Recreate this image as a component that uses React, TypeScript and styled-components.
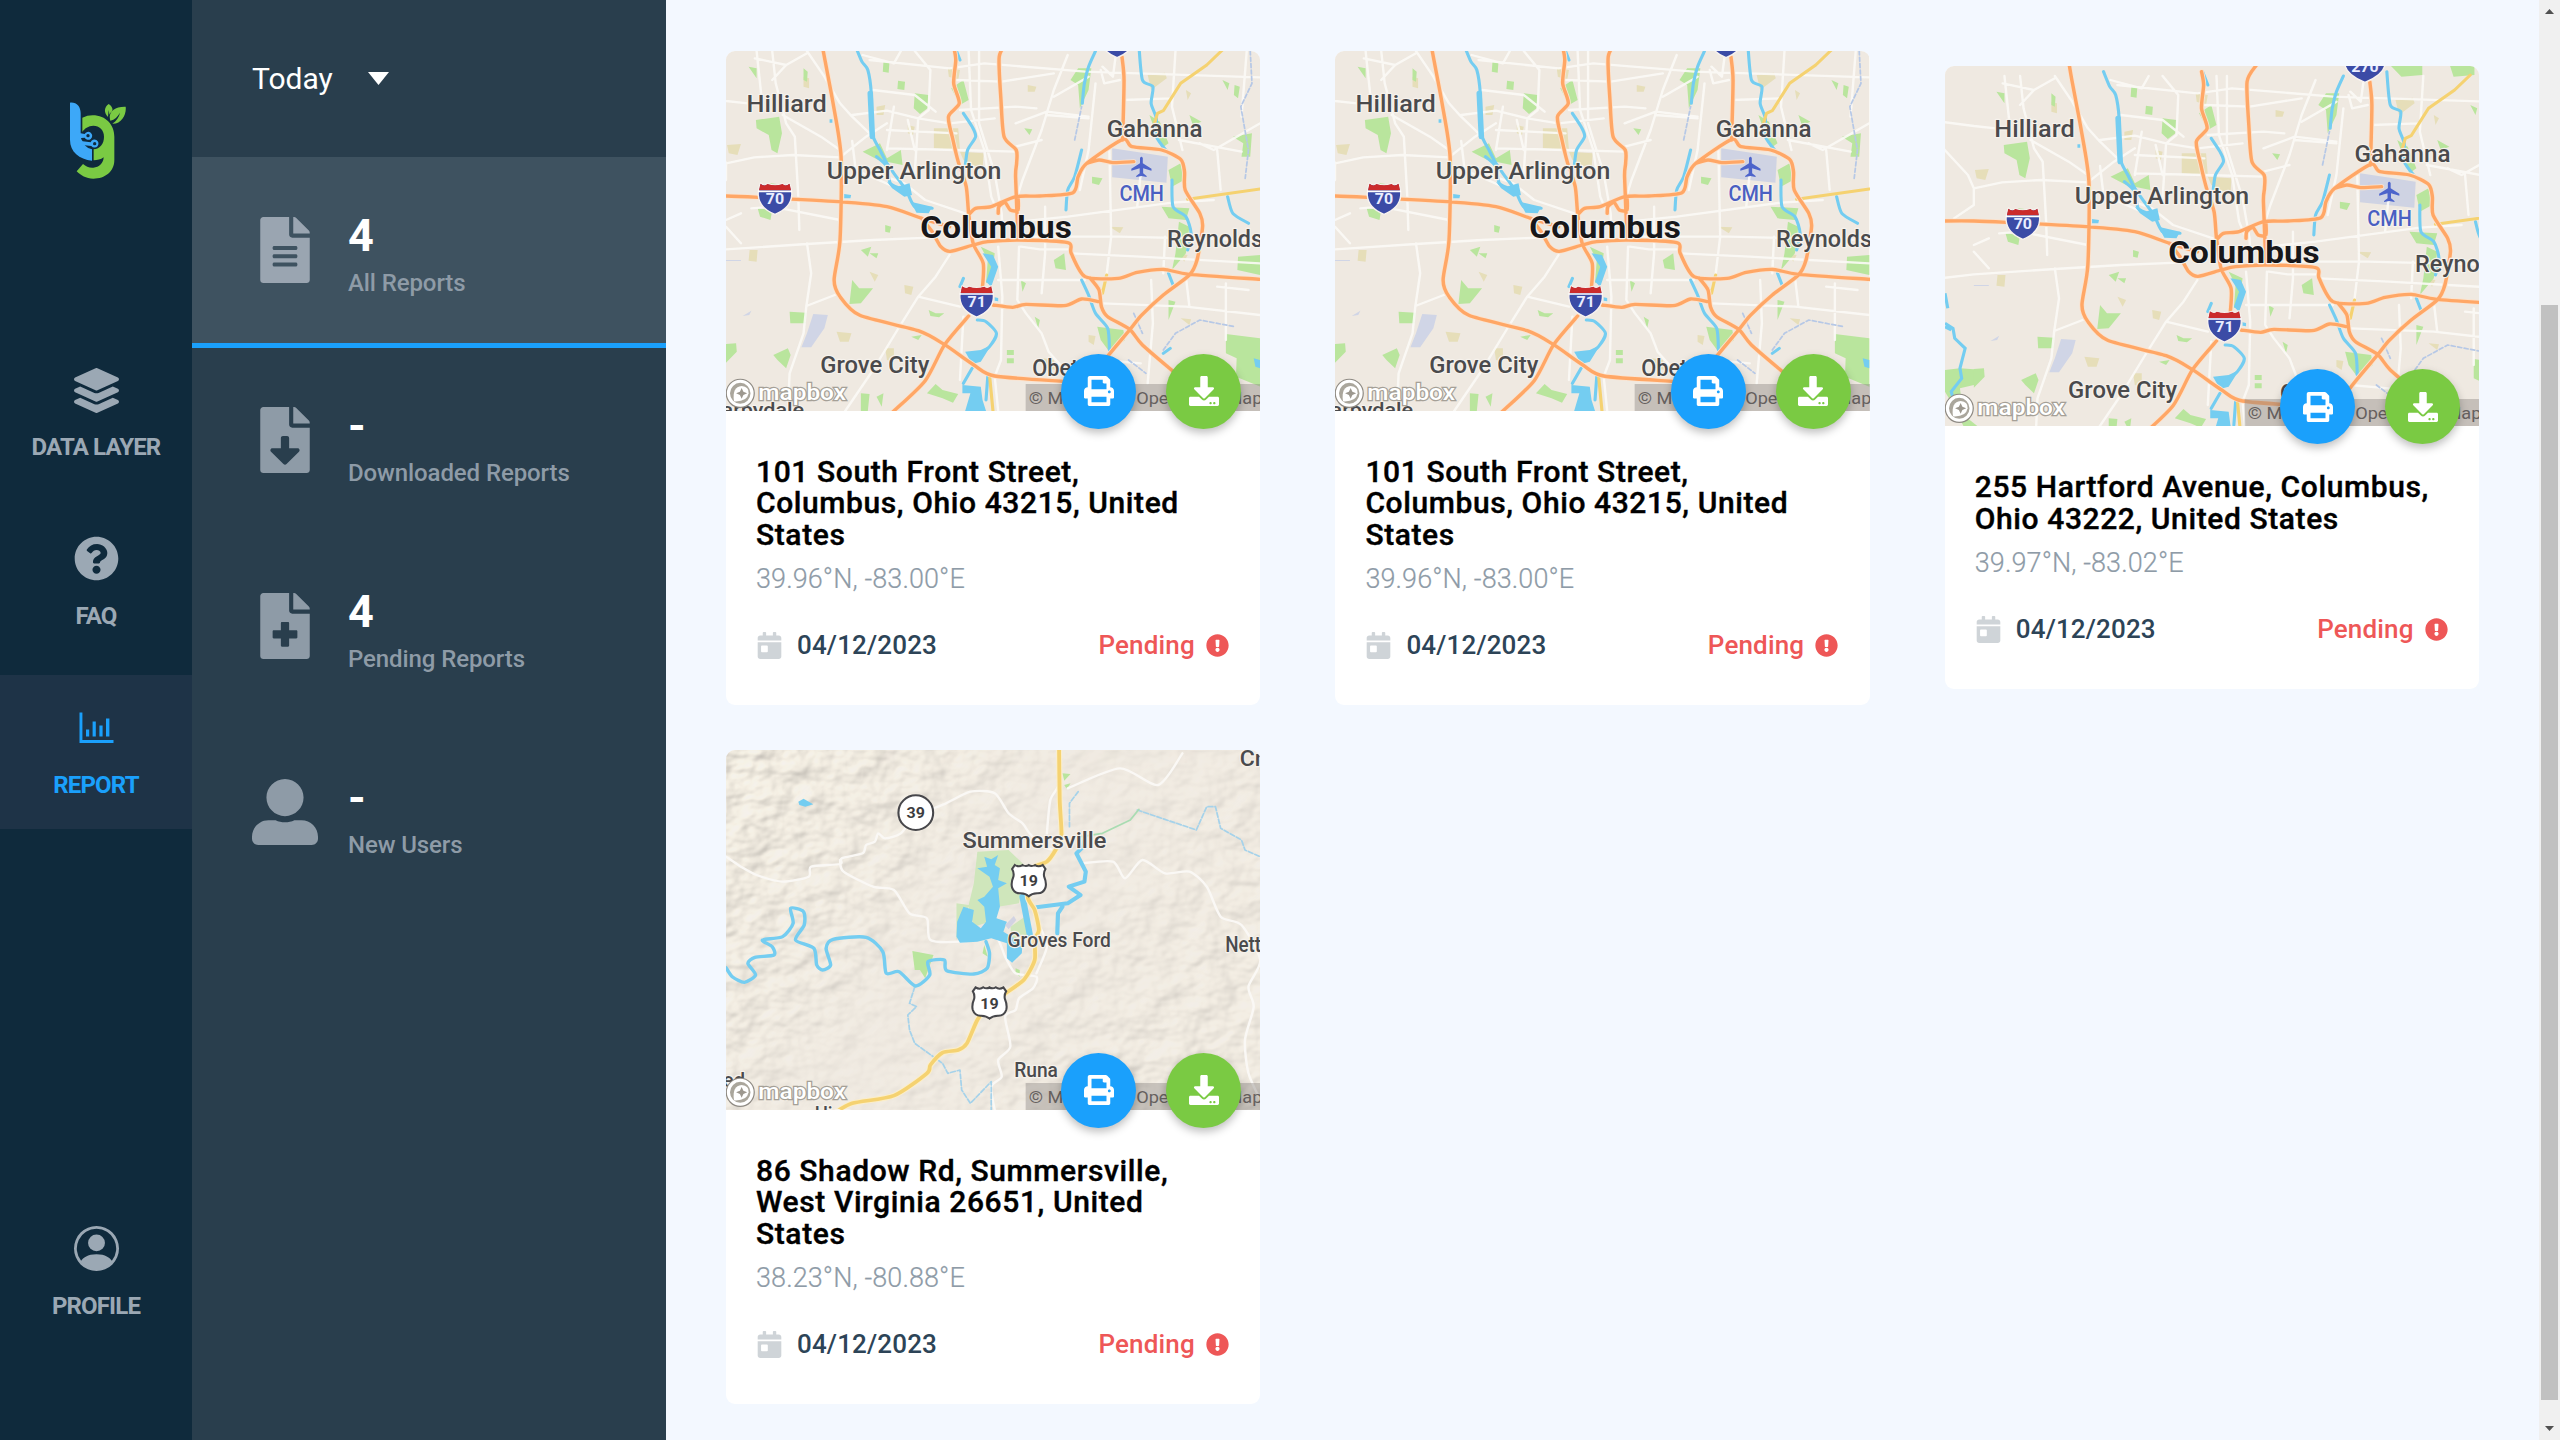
import React from "react";
import styled, { createGlobalStyle, css } from "styled-components";
import {
  FaCalendarDay,
  FaDownload,
  FaExclamationCircle,
  FaFileAlt,
  FaFileDownload,
  FaFileMedical,
  FaLayerGroup,
  FaPrint,
  FaQuestionCircle,
  FaUserAlt,
} from "react-icons/fa";
import { BsPersonCircle } from "react-icons/bs";

const color = {
  rail: "#0f2a3c",
  railActive: "#1e3347",
  panel: "#293e4d",
  panelActive: "#3e5260",
  page: "#f3f8ff",
  blue: "#1aa0fc",
  green: "#7aca43",
  red: "#ee5757",
  muted: "#9ba8b4",
  label: "#8e9ba7",
};

const GlobalStyle = createGlobalStyle`
  *, *::before, *::after { box-sizing: border-box; }
  body {
    margin: 0;
    overflow: hidden;
    background: ${color.page};
    font-family: Roboto, "Liberation Sans", sans-serif;
  }
`;

const Shell = styled.div`
  display: flex;
  width: 2560px;
  height: 1440px;
  overflow: hidden;
`;

/* ---------- navigation rail ---------- */

const Rail = styled.nav`
  display: flex;
  flex-direction: column;
  align-items: stretch;
  flex: 0 0 192px;
  padding: 102px 0 90px;
  background: ${color.rail};
`;

const LogoMark = styled.svg`
  display: block;
  width: 56px;
  height: 77px;
  margin: 0 0 158px 70px;
`;

const RailGroup = styled.div`
  display: flex;
  flex-direction: column;
  gap: 15px;
`;

const RailItem = styled.a<{ $active?: boolean; $last?: boolean }>`
  display: flex;
  flex-direction: column;
  align-items: center;
  height: 154px;
  padding-top: 30px;
  color: ${(p) => (p.$active ? color.blue : color.muted)};
  background: ${(p) => (p.$active ? color.railActive : "transparent")};
  ${(p) => p.$last && css`margin-top: auto;`}
`;

const RailIcon = styled.span<{ $drop?: number }>`
  display: flex;
  align-items: center;
  justify-content: center;
  height: 45px;
  padding-top: ${(p) => p.$drop ?? 0}px;
  font-size: 45px;

  svg {
    flex: none;
  }
`;

const RailLabel = styled.span`
  margin-top: 20px;
  font-size: 24px;
  font-weight: 700;
  line-height: 30px;
  letter-spacing: -0.85px;
  white-space: nowrap;
`;

/* ---------- report summary panel ---------- */

const Panel = styled.aside`
  flex: 0 0 474px;
  background: ${color.panel};
`;

const PeriodPicker = styled.div`
  display: flex;
  align-items: flex-start;
  height: 157px;
  padding: 61px 0 0 60px;
  color: #fff;
  font-size: 30px;
  line-height: 36px;
`;

const PeriodName = styled.span`
  width: 116px;
`;

const Caret = styled.svg`
  width: 21px;
  height: 13px;
  margin-top: 11px;
`;

const Stat = styled.div<{ $active?: boolean }>`
  display: flex;
  gap: 30px;
  height: ${(p) => (p.$active ? 191 : 186)}px;
  padding: ${(p) => (p.$active ? 60 : 59)}px 0 0 60px;
  background: ${(p) => (p.$active ? color.panelActive : "transparent")};
  border-bottom: ${(p) => (p.$active ? `5px solid ${color.blue}` : "0")};
`;

const StatIcon = styled.span<{ $active?: boolean }>`
  display: flex;
  justify-content: center;
  width: 66px;
  height: 66px;
  color: ${(p) => (p.$active ? "#9aa5b1" : color.label)};
  font-size: 66px;
`;

const StatText = styled.div`
  display: flex;
  flex-direction: column;
`;

const StatValue = styled.strong`
  height: 52px;
  margin-top: -7px;
  color: #fff;
  font-size: 45px;
  font-weight: 700;
  line-height: 52px;
`;

const StatLabel = styled.span`
  margin-top: 6px;
  color: ${color.label};
  font-size: 24px;
  font-weight: 500;
  line-height: 30px;
  letter-spacing: -0.1px;
  white-space: nowrap;
`;

/* ---------- report cards ---------- */

const Content = styled.main`
  flex: 1;
  padding: 50.6px 60px 0;
`;

const CardGrid = styled.div`
  display: grid;
  grid-template-columns: repeat(3, 534.3px);
  align-items: center;
  column-gap: 75.1px;
  row-gap: 45px;
`;

const Card = styled.article`
  border-radius: 9px;
  background: #fff;
`;

const MapFrame = styled.div`
  position: relative;
  height: 360px;
`;

const MapSvg = styled.svg`
  display: block;
  width: 100%;
  height: 360px;
  border-radius: 9px 9px 0 0;
  overflow: hidden;
  font-family: Roboto, "Liberation Sans", sans-serif;
`;

const CardActions = styled.div`
  position: absolute;
  right: 19px;
  bottom: -18px;
  display: flex;
  gap: 30px;
`;

const RoundButton = styled.button<{ $tone: string }>`
  display: flex;
  align-items: center;
  justify-content: center;
  width: 75px;
  height: 75px;
  padding: 0;
  border: 0;
  border-radius: 50%;
  color: #fff;
  background: ${(p) => p.$tone};
  box-shadow: 0 4px 9px rgba(0, 0, 0, 0.25);
  font-size: 30px;
`;

const CardBody = styled.div`
  padding: 45px 30px 42.7px;
`;

const Address = styled.h3`
  margin: 0;
  color: #000;
  font-size: 30px;
  font-weight: 500;
  line-height: 31.5px;
  letter-spacing: 0.6px;
  -webkit-text-stroke: 0.4px #000;
`;

const Coordinates = styled.p`
  margin: 13px 0 0;
  color: ${color.label};
  font-size: 27px;
  font-weight: 300;
  line-height: 32px;
  letter-spacing: 0.1px;
  -webkit-text-stroke: 0.2px ${color.label};
`;

const CardFooter = styled.div`
  display: flex;
  justify-content: space-between;
  margin-top: 33px;
  padding-right: 1.5px;
  line-height: 34px;
`;

const Meta = styled.span<{ $tone: string; $gap: number }>`
  display: flex;
  align-items: center;
  gap: ${(p) => p.$gap}px;
  color: ${(p) => p.$tone};
  font-size: 26px;
  font-weight: 500;
  letter-spacing: 0.15px;
`;

const MetaIcon = styled.span<{ $tone: string; $size: number }>`
  display: flex;
  color: ${(p) => p.$tone};
  font-size: ${(p) => p.$size}px;
`;

/* ---------- scroll track ---------- */

const ScrollTrack = styled.div`
  display: flex;
  flex-direction: column;
  align-items: center;
  justify-content: space-between;
  flex: 0 0 21px;
  padding: 9px 0;
  background: #f0f0f0;
`;

const ScrollThumb = styled.div`
  width: 17px;
  height: 1095px;
  margin: 291px 0 26px;
  background: #c1c1c1;
`;

const ScrollArrow = styled.svg`
  flex: none;
  width: 9px;
  height: 5px;
`;

/* ---------- map artwork ---------- */

/* Turns "M x y L x y x y ..." polylines into gently rounded curves. */
const smooth = (d: string) =>
  d
    .split("M")
    .filter((part) => part.trim())
    .map((part) => {
      const n = part.replace(/L/g, " ").trim().split(/\s+/).map(Number);
      const pts: number[][] = [];
      for (let i = 0; i + 1 < n.length; i += 2) pts.push([n[i], n[i + 1]]);
      let out = `M${pts[0][0]} ${pts[0][1]}`;
      for (let i = 0; i < pts.length - 1; i++) {
        const a = pts[Math.max(0, i - 1)];
        const b = pts[i];
        const c = pts[i + 1];
        const e = pts[Math.min(pts.length - 1, i + 2)];
        out += ` C${b[0] + (c[0] - a[0]) / 8} ${b[1] + (c[1] - a[1]) / 8} ${c[0] - (e[0] - b[0]) / 8} ${c[1] - (e[1] - b[1]) / 8} ${c[0]} ${c[1]}`;
      }
      return out;
    })
    .join(" ");

type LabelProps = { x: number; y: number; w?: number; size: number; fill?: string; weight?: number; children: string };

const MapLabel = ({ x, y, w, size, fill = "#4a4a4c", weight = 500, children }: LabelProps) => (
  <text
    x={x}
    y={y}
    textLength={w}
    lengthAdjust="spacingAndGlyphs"
    fontSize={size}
    fontWeight={weight}
    fill={fill}
    stroke="#f6f2ec"
    strokeWidth={7}
    strokeLinejoin="round"
    paintOrder="stroke"
  >
    {children}
  </text>
);

const Interstate = ({ x, y, n, wide = 0 }: { x: number; y: number; n: string; wide?: number }) => (
  <g transform={`translate(${x} ${y})`}>
    <path
      d={`M${-42 - wide} -46 Q-30 -36 -22 -44 Q0 -36 22 -44 Q30 -36 ${42 + wide} -46 Q${50 + wide} -20 ${48 + wide} -8 C${46 + wide} 20 24 38 0 48 C-24 38 ${-46 - wide} 20 ${-48 - wide} -8 Q${-50 - wide} -20 ${-42 - wide} -46 Z`}
      fill="#3b4ba6"
      stroke="#f7f2ee"
      strokeWidth="4"
    />
    <path
      d={`M${-42 - wide} -44 Q-30 -34 -22 -43 Q0 -35 22 -43 Q30 -34 ${42 + wide} -44 L${46 + wide} -24 H${-46 - wide} Z`}
      fill="#cb2b2c"
    />
    <path d={`M${-47 - wide} -21 H${47 + wide}`} stroke="#fff" strokeWidth="5" />
    <text x="0" y="18" fontSize="46" fontWeight="700" fill="#e9edff" textAnchor="middle">
      {n}
    </text>
  </g>
);

const UsRoute = ({ x, y }: { x: number; y: number }) => (
  <g transform={`translate(${x} ${y})`}>
    <path
      d="M-40 -46 Q-28 -38 -18 -46 Q-8 -40 0 -46 Q8 -40 18 -46 Q28 -38 40 -46 L48 -34 Q42 -24 44 -12 Q52 8 48 22 Q42 40 24 39 Q8 40 0 48 Q-8 40 -24 39 Q-42 40 -48 22 Q-52 8 -44 -12 Q-42 -24 -48 -34 Z"
      fill="#fff"
      stroke="#47474b"
      strokeWidth="6"
    />
    <text x="0" y="18" fontSize="46" fontWeight="700" fill="#3d3d40" textAnchor="middle">
      19
    </text>
  </g>
);

const MapCredits = () => (
  <g>
    <rect x="879" y="1032" width="680" height="84" fill="#8a8683" opacity="0.42" />
    <text x="888" y="1092" fontSize="52" fill="#66615f" textLength="672" lengthAdjust="spacingAndGlyphs">
      © Mapbox © OpenStreetMap
    </text>
    <ellipse cx="58" cy="1060" rx="36" ry="38" fill="#b7b2a8" stroke="#8f8b84" strokeWidth="12" />
    <ellipse cx="58" cy="1060" rx="34" ry="36" fill="#aaa69c" stroke="#fff" strokeWidth="9" />
    <path d="M40 1084 Q34 1040 62 1038 Q84 1040 82 1060 Q78 1086 40 1084 Z" fill="#fff" />
    <path d="M62 1044 L67 1055 L78 1060 L67 1065 L62 1076 L57 1065 L46 1060 L57 1055 Z" fill="#9d988f" />
    <text
      x="110"
      y="1079"
      fontSize="64"
      fontWeight="500"
      fill="#fff"
      stroke="#a5a097"
      strokeWidth="7"
      paintOrder="stroke"
      textLength="252"
      lengthAdjust="spacingAndGlyphs"
    >
      mapbox
    </text>
  </g>
);

const minorRoads = [
  "M-80 170 L17 183 L80 190",
  "M105 33 L118 160 M150 33 L160 130 L190 250 L215 290 L225 470 L228 570",
  "M250 33 L300 110 L345 190 L380 230 L430 280",
  "M-80 240 L0 330 L17 370 L98 352 L210 345 L345 352 L420 290 L480 250",
  "M100 55 L190 75 L250 40 M190 75 L150 120 M180 225 L290 290 L345 330",
  "M17 560 L60 610 M17 370 L17 420 L-40 460 M90 505 L150 500 L345 540",
  "M-80 640 L17 628 L250 612 L440 600 L620 592",
  "M250 610 L262 700 L248 800 L240 880 L200 1000 L195 1113",
  "M248 798 L330 765 M660 645 L620 710 L570 770 L510 870 L440 990 L360 1113",
  "M570 770 L690 800 M380 303 L390 390 L500 440",
  "M430 60 L660 85 L760 70 L1050 95 L1554 112",
  "M410 45 L500 70 L520 33 M560 33 L605 90 L600 210 L570 235 L560 400",
  "M380 225 L480 212 L570 235 L660 250 L790 235",
  "M440 150 L560 165 L620 215 M540 240 L560 330 M480 270 L680 280",
  "M480 325 L680 330 L850 335 M500 200 L480 330",
  "M450 400 L530 430 L590 480 L705 520",
  "M715 33 L722 210 L760 330 L780 470 L800 520",
  "M745 33 L745 250 L790 400 L810 520 L812 560",
  "M680 120 L810 125 L960 100 M690 210 L850 200 L910 205",
  "M1000 45 L960 150 L925 270 L870 420 L855 470",
  "M850 320 L925 300 M960 170 L1060 110 M940 225 L1060 235",
  "M850 250 L940 215 L1060 230 M1100 80 L1130 110 L1140 33 M1095 90 L1105 130 L1150 120",
  "M1080 130 L1060 330 L1035 450 M1120 330 L1125 590 L1110 720",
  "M1310 33 L1300 200 L1330 330 M1160 180 L1300 175 M1320 300 L1500 335",
  "M1515 33 L1500 230 M1554 250 L1420 330 L1380 310 M1430 330 L1440 450",
  "M860 545 L1000 530 L1300 488 L1420 480",
  "M865 590 L1150 590 L1554 600",
  "M865 620 L920 628 L1000 628 M935 500 L935 640 L925 760",
  "M800 620 L812 770 L808 960 L790 1010 L800 1113",
  "M860 620 L855 780 L880 820 L925 880 L945 935 L1000 1000",
  "M800 720 L940 720 L1050 720 M1010 640 L1210 650 L1554 670",
  "M1100 790 L1340 800 L1554 825 M1240 720 L1245 850 L1230 1030",
  "M1455 730 L1455 900 M1340 710 L1350 800 M1430 740 L1520 750",
  "M700 830 L690 1020 M1100 960 L1210 970",
  "M60 520 L17 540 M1210 400 L1200 500 M1280 590 L1275 700",
];

const greens = [
  "M103 240 L170 230 L178 280 L165 340 L148 330 L140 285 L105 265 Z",
  "M560 160 L600 165 L597 205 L575 222 L557 205 Z",
  "M380 720 L400 745 L440 745 L405 790 L372 792 Z",
  "M200 815 L248 818 L245 850 L202 850 Z",
  "M153 945 L195 925 L203 945 L190 985 L165 960 Z",
  "M17 912 L46 910 L48 935 L17 968 Z",
  "M595 1060 L620 1032 L640 1050 L685 1062 L670 1088 L640 1075 Z",
  "M1455 882 L1554 895 L1554 1040 L1484 1010 L1486 955 L1455 940 Z",
  "M1490 650 L1554 645 L1554 705 L1488 690 Z",
  "M1030 85 L1068 85 L1060 150 L1035 205 L1030 135 L1008 120 Z",
  "M1290 390 L1325 370 L1335 420 L1300 440 Z",
  "M1270 500 L1350 505 L1340 540 L1290 535 Z",
  "M1320 545 L1350 560 L1340 640 L1300 690 L1310 640 Z",
  "M1085 860 L1160 870 L1165 900 L1120 935 L1095 900 Z",
  "M1475 290 L1530 280 L1525 350 L1500 350 L1505 310 Z",
  "M410 335 L460 310 L480 355 L520 330 L525 375 L455 360 Z",
  "M750 620 L790 640 L780 720 L765 730 L770 660 Z",
  "M450 1070 L470 1060 L465 1100 Z M960 660 L990 640 L995 690 L965 685 Z",
  "M82 80 L105 85 L105 115 Z M470 65 L487 70 L485 98 L468 95 Z",
  "M512 122 L532 125 L530 150 L510 147 Z M875 265 L898 268 L890 285 Z",
  "M108 505 L150 510 L145 540 L115 530 Z M145 430 L163 432 L160 455 L145 452 Z",
  "M665 145 L700 120 L715 180 L690 195 Z M1235 225 L1265 245 L1290 310 L1270 325 Z",
  "M1445 120 L1465 130 L1460 150 Z M1480 135 L1495 140 L1490 175 L1478 165 Z",
  "M600 810 L620 820 L645 820 L630 832 L605 828 Z M430 640 L455 640 L450 655 Z",
  "M405 630 L435 620 L425 650 Z M865 720 L880 730 L870 755 Z M905 830 L920 840 L915 865 Z",
  "M825 930 L845 930 L845 945 L825 945 Z M825 955 L845 955 L845 970 L825 970 Z",
  "M475 555 L492 560 L488 578 L475 575 Z M240 85 L252 95 L250 125 L240 120 Z",
  "M1290 780 L1310 785 L1290 840 Z M550 890 L580 885 L570 900 Z M1350 225 L1385 245 L1360 255 Z",
  "M405 1060 L430 1062 L425 1113 L405 1113 Z M1070 410 L1100 415 L1090 435 L1070 430 Z",
];

const sands = [
  "M615 265 L685 265 L690 330 L615 325 Z M690 335 L758 340 L755 390 L700 360 Z",
  "M335 875 L378 880 L370 905 L345 905 Z M20 315 L60 312 L50 345 L25 340 Z",
  "M85 630 L108 630 L105 665 L82 662 Z M1230 105 L1280 98 L1285 115 L1240 150 Z",
  "M430 695 L455 705 L445 725 Z M930 955 L960 960 L965 990 L940 985 Z",
  "M1325 835 L1355 838 L1350 855 Z M1120 560 L1160 562 L1150 580 Z",
  "M450 200 L475 195 L470 225 L450 225 Z M530 735 L556 740 L550 765 L532 760 Z",
  "M475 925 L500 925 L500 965 L480 960 Z M885 135 L910 140 L905 155 L885 155 Z",
  "M655 85 L690 90 L685 120 L658 110 Z M1340 150 L1355 160 L1345 180 Z",
  "M540 255 L560 260 L555 285 L540 280 Z M1060 885 L1080 888 L1075 915 L1060 905 Z",
  "M1320 640 L1345 645 L1335 665 Z M240 110 L256 115 L256 145 L240 140 Z",
];

const waterLines = [
  "M390 20 L408 65 L425 90 L435 160 L438 280 L460 330 L480 370 L500 400 L535 450 L560 500 L610 505",
  "M675 20 L690 60 M700 220 L725 260 L735 290 L712 330 L705 380",
  "M1080 33 L1060 80 L1048 130 L1042 190",
  "M1205 20 L1215 120 L1245 140 L1240 190 L1255 235 L1255 290 L1290 340",
  "M1300 420 L1303 500 L1340 530 L1355 580 L1345 630",
  "M1040 330 L1020 410 L1000 450 L995 510",
  "M1460 470 L1475 520 L1520 550",
  "M1040 720 L1060 765 L1080 820 L1115 865 L1120 930",
  "M740 840 L765 845 L795 880 L775 920 L740 950",
  "M450 350 L480 380 L490 430 L530 450",
  "M700 715 L690 740 M725 985 L700 1030 M770 1010 L765 1080",
  "M1290 700 L1305 740 M1275 940 L1295 925",
];

const waterAreas = [
  "M548 485 L610 500 L600 520 L565 518 Z",
  "M480 425 L510 440 L545 430 L552 465 L530 470 L495 445 Z",
  "M755 640 L785 645 L800 680 L780 740 L765 725 L780 680 Z",
  "M705 935 L750 930 L780 915 L750 965 L725 972 Z",
  "M697 1035 L750 1040 L755 1080 L765 1113 L705 1113 L720 1060 L697 1060 Z",
  "M1535 955 L1554 960 L1554 985 L1540 980 Z M357 462 L377 465 L375 475 L357 475 Z",
  "M315 238 L323 238 L323 248 L315 248 Z M790 772 L800 774 L800 784 L790 782 Z",
];

const highways = [
  "M-90 468 L17 468 L110 472 L340 485 L480 500 L580 535 L660 560",
  "M290 -10 L298 40 L325 190 L348 350 L345 600 L328 720 L345 770 L402 826 L570 872 L646 914 L730 975 L790 1008 L990 1024",
  "M672 20 L678 60 L672 130 L688 190 L657 230 L670 300 L685 365 L708 440 L715 520 L728 610 L757 670 L755 740",
  "M830 0 L803 50 L808 180 L817 290 L852 330 L853 370 L850 410 L857 590",
  "M715 525 L735 505 L780 500 L850 470 L920 468 L1015 458 L1030 410 L1055 370 L1158 298 L1185 320 L1270 330 L1325 358 L1336 395 L1338 450 L1380 520 L1388 560 L1372 660 L1350 705 L1275 765 L1212 826 L1178 870 L1110 955 L1050 1040",
  "M1156 50 L1162 120 L1158 300",
  "M1055 370 L1090 360 L1130 368 L1190 365",
  "M580 535 L610 575 L635 620 L662 634 L728 615 L770 605 L860 600 L1000 608 L1010 640 L1050 710 L1145 715 L1200 697 L1275 688 L1350 703 L1554 718",
  "M1065 715 L1090 750 L1097 800 L1115 830 L1178 868 L1215 915 L1310 1000",
  "M785 795 L842 802 L880 793 L990 797 L1040 777 L1090 785",
  "M715 828 L646 914 L590 1022 L500 1113 L440 1170",
  "M800 520 L802 500 L820 488 L835 510 L857 510 L857 470",
];

const highwayPath = smooth(highways.join(" "));
const streamPath = smooth(waterLines.join(" "));

const ColumbusLayer = () => (
  <g strokeLinejoin="round" strokeLinecap="round">
    <path d={sands.join(" ")} fill="#e6deb9" />
    <path d={greens.join(" ")} fill="#b9e59d" />
    <path d="M1128 325 L1195 335 L1288 350 L1284 428 L1128 412 Z" fill="#cfd3e3" />
    <path d="M268 822 L310 825 L300 865 L262 922 L234 922 L250 880 Z M65 828 L90 812 L84 825 Z M17 660 H60 V663 H17 Z" fill="#d0d5e6" />
    <path d={minorRoads.join(" ")} fill="none" stroke="#fbf9f6" strokeWidth="7" opacity="0.9" />
    <path d={streamPath} fill="none" stroke="#74cdf1" strokeWidth="9" />
    <path d="M432 160 L438 290" fill="none" stroke="#74cdf1" strokeWidth="16" />
    <path d={waterAreas.join(" ")} fill="#74cdf1" />
    <path
      d="M1525 33 L1530 130 L1498 200 L1520 330 L1510 420 M1020 300 L1040 200 M1175 960 L1225 1000 M1275 930 L1310 880 L1380 840 L1480 860 M1190 820 L1215 880"
      fill="none"
      stroke="#b6c8e6"
      strokeWidth="5"
      strokeDasharray="12 7"
    />
    <path
      d="M1445 30 L1400 75 L1325 130 L1275 212 L1258 220 L1250 250 M1345 478 L1554 447 M775 1005 L785 1113 M1070 715 L1100 760 L1112 705"
      fill="none"
      stroke="#f5d271"
      strokeWidth="9"
    />
    <path d={highwayPath} fill="none" stroke="#fbe3cf" strokeWidth="15" />
    <path d={highwayPath} fill="none" stroke="#ffa766" strokeWidth="10" />
    <g transform="translate(1212 380)">
      <path d="M-4 -26 Q0 -34 4 -26 V-10 L29 6 V12 L5 5 V20 L15 28 V31 L0 28 L-15 31 V28 L-5 20 V5 L-29 12 V6 L-4 -10 Z" fill="#4d64cb" />
    </g>
    <MapLabel x={76} y={216} w={231} size={70}>Hilliard</MapLabel>
    <MapLabel x={1112} y={290} w={276} size={70}>Gahanna</MapLabel>
    <MapLabel x={307} y={416} w={502} size={70}>Upper Arlington</MapLabel>
    <MapLabel x={1149} y={484} w={128} size={64} fill="#4a5fc2">CMH</MapLabel>
    <MapLabel x={576} y={594} w={436} size={96} fill="#17171a" weight={700}>Columbus</MapLabel>
    <MapLabel x={288} y={998} w={314} size={70}>Grove City</MapLabel>
    <MapLabel x={898} y={1009} w={164} size={70}>Obetz</MapLabel>
    <Interstate x={158} y={475} n="70" />
    <Interstate x={738} y={783} n="71" />
  </g>
);

const ColumbusMap = () => (
  <MapSvg viewBox="17 33 1537 1080" preserveAspectRatio="none">
    <rect x="17" y="33" width="1537" height="1080" fill="#efe9e1" />
    <ColumbusLayer />
    <Interstate x={1142} y={5} n="270" />
    <MapLabel x={1286} y={622} w={276} size={70}>Reynolds</MapLabel>
    <MapLabel x={4} y={1132} w={238} size={62}>arbydale</MapLabel>
    <MapCredits />
  </MapSvg>
);

const HartfordMap = () => (
  <MapSvg viewBox="17 33 1537 1080" preserveAspectRatio="none">
    <rect x="17" y="33" width="1537" height="1080" fill="#efe9e1" />
    <path d="M17 945 L60 940 L130 945 L100 990 L60 1000 L70 1080 L110 1113 L70 1113 L40 1050 L17 1010 Z M1300 33 H1390 V60 L1330 65 Z M1470 33 H1540 V60 L1480 65 Z" fill="#b9e59d" />
    <path d="M17 715 L25 760 M17 805 L40 820 L45 850 L75 880 L60 940 L65 970 L35 1010 L45 1050 M17 815 L35 825" fill="none" stroke="#74cdf1" strokeWidth="9" />
    <g transform="translate(83 30)">
      <ColumbusLayer />
      <Interstate x={1142} y={4} n="270" wide={10} />
      <MapLabel x={1286} y={622} w={276} size={70}>Reynolds</MapLabel>
    </g>
    <MapCredits />
  </MapSvg>
);

const riverPath = smooth(
  "M17 683 L35 710 L70 727 L102 705 L80 670 L100 652 L155 645 L150 620 L122 600 L180 590 L210 550 L203 505 L240 515 L242 555 L217 600 L270 625 L278 675 L295 690 L318 675 L305 625 L325 598 L420 592 L468 635 L478 700 L515 695 L562 738 L603 705 L598 665 L645 660 L652 692 L730 702 L768 685 L775 640 L765 605"
);

const routePath = smooth(
  "M975 15 L977 180 L982 290 L965 330 L940 365 L900 385 L885 470 L905 510 L917 570 L905 600 L905 660 L875 718 L825 757 L770 800 L740 840 L710 910 L685 930 L640 938 L605 975 L595 1000 L500 1067 L380 1090 L320 1125"
);

const lanePath = smooth(
  "M17 350 L60 380 L105 405 L180 425 L255 410 L262 380 L345 372 L350 355 L410 340 L420 315 L445 305 L455 280 L475 295 L520 280 L560 230 L650 190 L720 155 L790 160 L830 220 L870 250 L890 280 L930 320 L960 330 M345 360 L355 395 L440 440 L500 450 L545 520 L595 535 L605 600 L690 605 L790 590 L820 650 L850 700 L910 710 L900 745 L860 775 L850 810 L820 830 L835 920 L800 960 L810 1010 L780 1040 L790 1110 M1000 145 L1150 85 L1260 135 L1330 40 M970 30 L975 130 L950 180 L940 280 M1040 370 L1130 365 L1165 415 L1215 360 L1280 400 L1350 395 L1400 440 L1440 530 L1500 555 L1554 660 L1520 740 L1535 800 L1510 900 L1520 1000 L1554 1080 M920 560 L940 620 L910 700"
);

const SummersvilleMap = () => (
  <MapSvg viewBox="17 30 1537 1080" preserveAspectRatio="none">
    <defs>
      <filter id="relief" x="0" y="0" width="100%" height="100%" colorInterpolationFilters="sRGB">
        <feTurbulence type="fractalNoise" baseFrequency="0.011 0.014" numOctaves="3" seed="11" result="n" />
        <feDiffuseLighting in="n" surfaceScale="14" diffuseConstant="1.15" lightingColor="#f6f1e0">
          <feDistantLight azimuth="225" elevation="58" />
        </feDiffuseLighting>
      </filter>
      <linearGradient id="fade" x1="0" y1="0" x2="1" y2="0.5">
        <stop offset="0" stopColor="#fff" />
        <stop offset="0.35" stopColor="#999" />
        <stop offset="0.55" stopColor="#333" />
        <stop offset="1" stopColor="#888" />
      </linearGradient>
      <mask id="reliefMask">
        <rect x="17" y="30" width="1537" height="1080" fill="url(#fade)" />
      </mask>
    </defs>
    <rect x="17" y="30" width="1537" height="1080" fill="#efe9e1" />
    <g mask="url(#reliefMask)" opacity="0.42">
      <rect x="17" y="30" width="1537" height="1080" filter="url(#relief)" />
    </g>
    <g fill="none" strokeLinejoin="round" strokeLinecap="round">
      <path
        d="M740 335 L830 330 L880 380 L860 490 L800 500 L790 540 L730 560 L715 500 L680 600 L680 490 L715 495 L730 430 Z M835 560 L880 528 L885 590 L840 600 Z"
        fill="#cfe6bb"
      />
      <path d="M553 633 L614 645 L590 715 L575 690 L560 690 Z M985 100 L1008 102 L990 122 Z M990 135 L1008 130 L998 148 Z M760 615 L770 650 L755 640 Z M850 685 L862 690 L862 710 L850 700 Z" fill="#b9e59d" />
      <path d={lanePath} stroke="#faf8f5" strokeWidth="7" />
      <path
        d="M560 740 L545 790 L565 800 L540 825 L545 870 L560 910 L640 970 L655 1000 L690 990 L695 1050 L720 1090 L780 1025 L780 1110 M1030 155 L1005 190 L1005 260 M1200 210 L1370 270 L1400 200 L1425 200 L1440 265 L1500 300 L1510 330 L1554 350"
        stroke="#a5d2ea"
        strokeWidth="5"
        strokeDasharray="14 6"
      />
      <path d="M1040 290 L1100 280 L1180 240 L1205 208" stroke="#a9dcb2" strokeWidth="5" />
      <path d={riverPath} stroke="#74cdf1" strokeWidth="10" />
      <path d="M1050 285 L1045 320 L1025 340 L1052 395 L1048 425 L1003 440 L1037 465 L1000 490 L910 502 M985 500 L972 520 L970 580" stroke="#74cdf1" strokeWidth="12" />
      <path d="M870 470 L892 590" stroke="#74cdf1" strokeWidth="18" />
      <path
        d="M760 350 L780 358 L800 345 L790 375 L805 385 L800 420 L825 430 L800 445 L805 500 L795 535 L825 545 L815 575 L870 610 L868 640 L840 668 L825 655 L825 610 L780 595 L740 605 L690 608 L680 590 L682 545 L700 500 L730 510 L725 545 L750 565 L765 545 L760 500 L740 480 L760 470 L785 440 L775 410 L740 385 L768 380 Z M225 185 L240 176 L268 193 L245 200 L228 195 Z"
        fill="#74cdf1"
      />
      <path d="M820 555 L845 528 L852 540 L830 568 Z" fill="#d2d3e2" />
      <path d={routePath} stroke="#fbeec9" strokeWidth="17" />
      <path d={routePath} stroke="#f5d271" strokeWidth="11" />
    </g>
    <ellipse cx="563" cy="218" rx="50" ry="52" fill="#fff" stroke="#47474b" strokeWidth="6" />
    <text x="563" y="234" fontSize="46" fontWeight="700" fill="#3d3d40" textAnchor="middle">39</text>
    <MapLabel x={697} y={324} w={414} size={67}>Summersville</MapLabel>
    <MapLabel x={827} y={621} w={297} size={60}>Groves Ford</MapLabel>
    <MapLabel x={1453} y={635} w={146} size={64}>Nettie</MapLabel>
    <MapLabel x={1495} y={77} w={190} size={68}>Craigs</MapLabel>
    <MapLabel x={846} y={1012} w={126} size={61}>Runa</MapLabel>
    <MapLabel x={8} y={1040} w={64} size={58}>ed</MapLabel>
    <MapLabel x={272} y={1142} w={110} size={62}>Hico</MapLabel>
    <UsRoute x={888} y={421} />
    <UsRoute x={775} y={788} />
    <g transform="translate(0 -3)">
      <MapCredits />
    </g>
  </MapSvg>
);

/* ---------- drawings for the rail ---------- */

const Logo = () => (
  <LogoMark viewBox="60 66 168 231">
    <path
      d="M60 68 C80 66 92 80 92 100 V160 L104 162 A12 12 0 1 1 104 173 L93 174 Q94 180 98 184 L122 187 A12 12 0 1 1 124 198 L104 196 Q113 206 126 208 V242 C88 238 60 216 60 180 Z"
      fill="#3da8f8"
    />
    <circle cx="114" cy="167" r="5" fill="#0f2a3c" />
    <circle cx="134" cy="191" r="5" fill="#0f2a3c" />
    <path
      d="M97 113 Q112 106 128 106 C168 106 193 135 193 170 V240 C193 275 165 296 130 296 C108 296 92 286 80 274 L99 252 C108 260 118 264 130 263 C148 262 160 250 161 232 C152 239 142 241 131 241 V208 C150 206 162 192 162 170 C162 150 148 137 130 137 C115 137 103 146 97 156 Z"
      fill={color.green}
    />
    <path d="M181 122 C174 98 190 79 227 80 C230 102 216 132 187 131 C200 122 207 111 210 98 C203 110 194 119 181 122 Z" fill={color.green} />
    <path d="M174 111 C161 98 162 82 176 72 C188 80 190 90 185 95 C178 100 177 106 180 114 L176 90 Z" fill={color.green} />
  </LogoMark>
);

const ChartIcon = styled.svg`
  width: 35px;
  height: 31px;
`;

const BarChart = () => (
  <ChartIcon viewBox="0 0 35 31" fill="currentColor">
    <path d="M0.5 0.5 H3.4 V28 H34.5 V31 H0.5 Z" />
    <path d="M7 17.5 H10.2 V24.5 H7 Z M13.6 9.5 H16.8 V24.5 H13.6 Z M20.4 13.5 H23.6 V24.5 H20.4 Z M27 6.5 H30.4 V24.5 H27 Z" />
  </ChartIcon>
);

/* ---------- data ---------- */

const stats = [
  { icon: <FaFileAlt />, value: "4", label: "All Reports", active: true },
  { icon: <FaFileDownload />, value: "-", label: "Downloaded Reports" },
  { icon: <FaFileMedical />, value: "4", label: "Pending Reports" },
  { icon: <FaUserAlt />, value: "-", label: "New Users" },
];

const reports = [
  { map: <ColumbusMap />, address: "101 South Front Street, Columbus, Ohio 43215, United States", coords: "39.96°N, -83.00°E" },
  { map: <ColumbusMap />, address: "101 South Front Street, Columbus, Ohio 43215, United States", coords: "39.96°N, -83.00°E" },
  { map: <HartfordMap />, address: "255 Hartford Avenue, Columbus, Ohio 43222, United States", coords: "39.97°N, -83.02°E" },
  { map: <SummersvilleMap />, address: "86 Shadow Rd, Summersville, West Virginia 26651, United States", coords: "38.23°N, -80.88°E" },
];

export default function App() {
  return (
    <>
      <GlobalStyle />
      <Shell>
        <Rail>
          <Logo />
          <RailGroup>
            <RailItem>
              <RailIcon $drop={2}><FaLayerGroup /></RailIcon>
              <RailLabel>DATA LAYER</RailLabel>
            </RailItem>
            <RailItem>
              <RailIcon><FaQuestionCircle /></RailIcon>
              <RailLabel>FAQ</RailLabel>
            </RailItem>
            <RailItem $active>
              <RailIcon><BarChart /></RailIcon>
              <RailLabel>REPORT</RailLabel>
            </RailItem>
          </RailGroup>
          <RailItem $last>
            <RailIcon><BsPersonCircle /></RailIcon>
            <RailLabel>PROFILE</RailLabel>
          </RailItem>
        </Rail>

        <Panel>
          <PeriodPicker>
            <PeriodName>Today</PeriodName>
            <Caret viewBox="0 0 21 13"><path d="M0 0 H21 L10.5 13 Z" fill="#fff" /></Caret>
          </PeriodPicker>
          {stats.map((s) => (
            <Stat key={s.label} $active={s.active}>
              <StatIcon $active={s.active}>{s.icon}</StatIcon>
              <StatText>
                <StatValue>{s.value}</StatValue>
                <StatLabel>{s.label}</StatLabel>
              </StatText>
            </Stat>
          ))}
        </Panel>

        <Content>
          <CardGrid>
            {reports.map((r, i) => (
              <Card key={i}>
                <MapFrame>
                  {r.map}
                  <CardActions>
                    <RoundButton $tone={color.blue} aria-label="Print"><FaPrint /></RoundButton>
                    <RoundButton $tone={color.green} aria-label="Download"><FaDownload /></RoundButton>
                  </CardActions>
                </MapFrame>
                <CardBody>
                  <Address>{r.address}</Address>
                  <Coordinates>{r.coords}</Coordinates>
                  <CardFooter>
                    <Meta $tone="#2d4457" $gap={14}>
                      <MetaIcon $tone="#cfd4d8" $size={27}><FaCalendarDay /></MetaIcon>
                      04/12/2023
                    </Meta>
                    <Meta $tone={color.red} $gap={11}>
                      Pending
                      <MetaIcon $tone={color.red} $size={23}><FaExclamationCircle /></MetaIcon>
                    </Meta>
                  </CardFooter>
                </CardBody>
              </Card>
            ))}
          </CardGrid>
        </Content>

        <ScrollTrack>
          <ScrollArrow viewBox="0 0 9 5"><path d="M0 5 L4.5 0 L9 5 Z" fill="#505050" /></ScrollArrow>
          <ScrollThumb />
          <ScrollArrow viewBox="0 0 9 5"><path d="M0 0 L4.5 5 L9 0 Z" fill="#505050" /></ScrollArrow>
        </ScrollTrack>
      </Shell>
    </>
  );
}
